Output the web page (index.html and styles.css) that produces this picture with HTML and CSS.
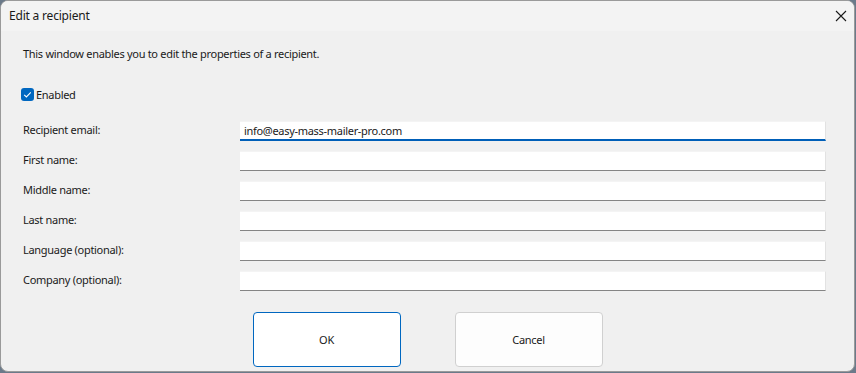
FILE: index.html
```html
<!DOCTYPE html>
<html>
<head>
<meta charset="utf-8">
<link rel="stylesheet" href="styles.css">
</head>
<body>
<div class="window">
  <div class="titlebar">
    <span class="title">Edit a recipient</span>
    <span class="close">
      <svg width="12" height="12" viewBox="0 0 12 12"><path d="M1 1 L11 11 M11 1 L1 11" stroke="#1a1a1a" stroke-width="1.1" fill="none"/></svg>
    </span>
  </div>
  <div class="content">
    <p class="desc">This window enables you to edit the properties of a recipient.</p>
    <label class="check">
      <span class="box"><svg width="13" height="13" viewBox="0 0 13 13"><path d="M3.2 6.8 L5.4 9 L9.8 4.4" stroke="#fff" stroke-width="1.1" fill="none"/></svg></span>
      <span>Enabled</span>
    </label>
    <div class="form">
      <span class="lbl">Recipient email:</span><div class="field focus">info@easy-mass-mailer-pro.com</div>
      <span class="lbl">First name:</span><div class="field"></div>
      <span class="lbl">Middle name:</span><div class="field"></div>
      <span class="lbl">Last name:</span><div class="field"></div>
      <span class="lbl">Language (optional):</span><div class="field"></div>
      <span class="lbl">Company (optional):</span><div class="field"></div>
    </div>
    <div class="buttons">
      <button class="btn default">OK</button>
      <button class="btn">Cancel</button>
    </div>
  </div>
</div>
</body>
</html>
```
FILE: styles.css
```css
html, body {
  margin: 0;
  padding: 0;
  background: #6b7a8a;
}
body {
  width: 856px;
  height: 373px;
  overflow: hidden;
  font-family: "Noto Sans", "Open Sans", sans-serif;
  font-size: 11px;
  letter-spacing: -0.3px;
  color: #1a1a1a;
}
.window {
  box-sizing: border-box;
  width: 855px;
  height: 372px;
  border: 1px solid #9a9a9a;
  border-radius: 8px;
  background: #f0f0f0;
  overflow: hidden;
  display: flex;
  flex-direction: column;
}
.titlebar {
  height: 30px;
  flex: none;
  background: #f3f3f3;
  display: flex;
  align-items: center;
  justify-content: space-between;
  padding: 0 7px 0 8px;
}
.title {
  font-size: 12px;
  letter-spacing: -0.2px;
  color: #1a1a1a;
  margin-top: -1px;
}
.close {
  display: flex;
  width: 12px;
  height: 12px;
  margin-top: -1px;
}
.content {
  padding: 0 0 0 22px;
  display: flex;
  flex-direction: column;
}
.desc {
  margin: 15px 0 0 0;
  line-height: 16px;
}
.check {
  display: flex;
  align-items: center;
  margin: 25px 0 0 -2px;
  gap: 2px;
}
.box {
  width: 13px;
  height: 13px;
  border-radius: 3px;
  background: #0067c0;
  display: flex;
}
.form {
  display: grid;
  grid-template-columns: 217px 586px;
  grid-auto-rows: 20px;
  row-gap: 10px;
  margin-top: 19px;
}
.lbl {
  line-height: 16px;
  margin-top: 1px;
}
.field {
  box-sizing: border-box;
  height: 20px;
  background: #fff;
  border-right: 1px solid #e2e2e2;
  border-top: 1px solid #f4f4f4;
  border-bottom: 1px solid #858585;
  font-size: 11px;
  line-height: 17px;
  padding-left: 4px;
}
.field.focus {
  border-bottom: 2px solid #005fb8;
}
.buttons {
  display: flex;
  justify-content: center;
  gap: 54px;
  margin: 21px 0 0 -22px;
}
.btn {
  width: 148px;
  height: 55px;
  box-sizing: border-box;
  background: #fdfdfd;
  border: 1px solid #d0d0d0;
  border-radius: 4px;
  font-family: inherit;
  font-size: 11px;
  letter-spacing: -0.3px;
  color: #1a1a1a;
  padding: 0;
}
.btn.default {
  border: 1px solid #0067c0;
  background: #fff;
}
```
